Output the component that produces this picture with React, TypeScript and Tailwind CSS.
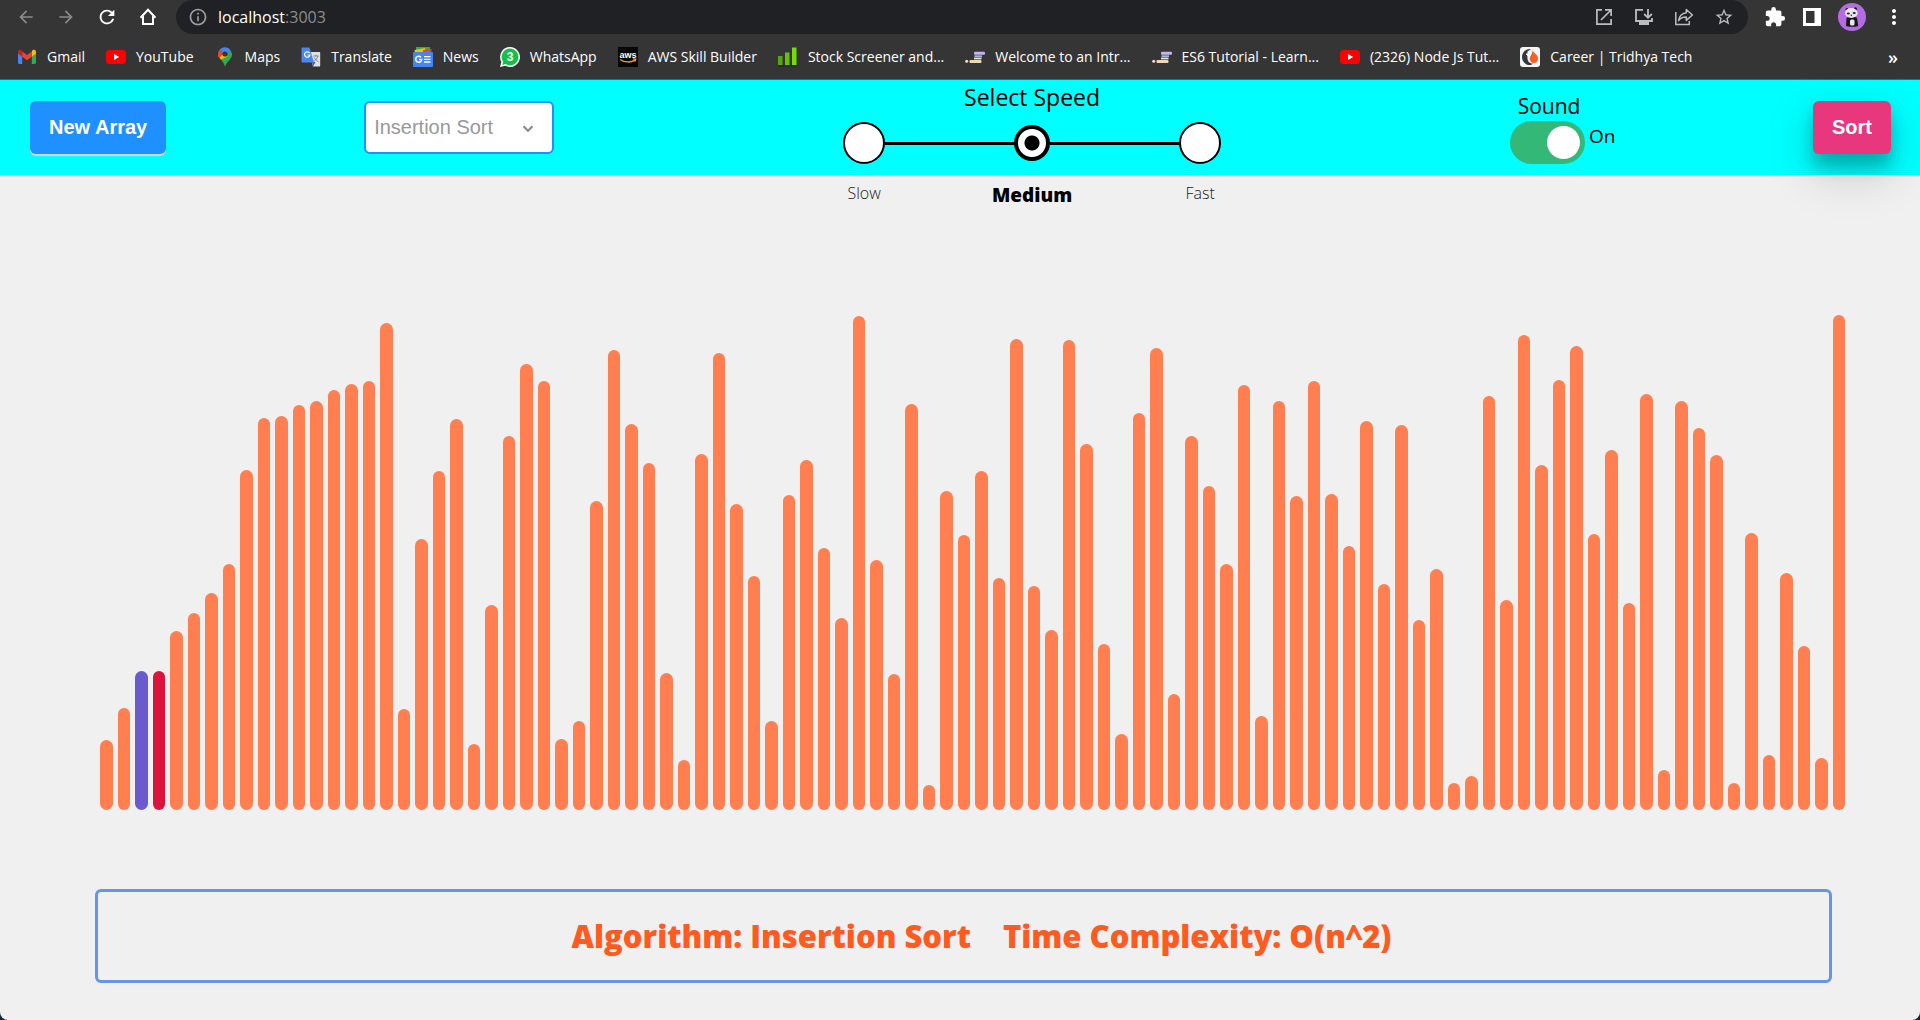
import React, { useState } from "react";
import { MdArrowBack, MdArrowForward, MdExtension, MdInfoOutline, MdMoreVert, MdRefresh, MdStarBorder } from "react-icons/md";

const BAR_VALUES = [
  70, 102, 139, 139, 179, 197, 217, 246, 340, 392, 394, 405, 409, 420, 426, 429, 487, 101, 271, 339, 391, 66, 205, 374,
  446, 429, 71, 89, 309, 460, 386, 347, 137, 50, 356, 457, 306, 234, 89, 315, 350, 262, 192, 494, 250, 136, 406, 25,
  319, 275, 339, 232, 471, 224, 180, 470, 366, 166, 76, 397, 462, 116, 374, 324, 246, 425, 94, 409, 314, 429, 316, 264,
  389, 226, 385, 190, 241, 27, 34, 414, 210, 475, 345, 430, 464, 276, 360, 207, 416, 40, 409, 382, 355, 27, 277, 55,
  237, 164, 52, 495,
];

function HomeIcon() {
  return (
    <svg viewBox="0 0 20 20" className="size-5" fill="none" stroke="currentColor" strokeWidth="2">
      <path d="M2.500 10.800 10 2.800l7.500 8" />
      <path d="M5 9v8h10V9" />
    </svg>
  );
}

function OpenIcon() {
  return (
    <svg viewBox="0 0 20 20" className="size-5" fill="none" stroke="currentColor" strokeWidth="1.700">
      <path d="M8 2.900H2.900v14.200h14.200V12" />
      <path d="M11 2.900h6.100V9M17 3 7 13" />
    </svg>
  );
}

function InstallIcon() {
  return (
    <svg viewBox="0 0 20 20" className="size-5" fill="none" stroke="currentColor" strokeWidth="1.800">
      <path d="M9 2.900H2V14h16v-3" />
      <path d="M14 2v8.500M10.200 7 14 10.800 17.800 7" />
      <path d="M5 16.500h10" strokeWidth="3" />
    </svg>
  );
}

function ShareIcon() {
  return (
    <svg viewBox="0 0 20 20" className="size-5" fill="none" stroke="currentColor" strokeWidth="1.500">
      <path d="M1.800 5v12.500h13.500V14" />
      <path d="M12.300 2.500 18.400 8l-6.100 5.400v-3.300C8.800 10 6.600 11 4.600 13.600c.5-4.200 3.200-7.200 7.700-7.900z" strokeLinejoin="round" />
    </svg>
  );
}

function SidePanelIcon() {
  return (
    <svg viewBox="0 0 20 20" className="size-5" fill="currentColor">
      <path d="M1 1h18v18H1zM4 4v12h8.500V4z" fillRule="evenodd" />
    </svg>
  );
}

function PandaAvatar() {
  return (
    <svg viewBox="0 0 28 28" className="size-7">
      <circle cx="14" cy="14" r="14" fill="#b56ce2" />
      <path d="M8.500 15c3-2 8-2 10.500 0l1.300 8-3 .8H11l-3-.8z" fill="#17171b" />
      <circle cx="9" cy="6.500" r="1.500" fill="#17171b" />
      <circle cx="17.500" cy="5.700" r="1.500" fill="#17171b" />
      <ellipse cx="13.300" cy="10" rx="6.300" ry="5" fill="#e8e8ea" />
      <ellipse cx="10.300" cy="10.600" rx="1.600" ry="1" fill="#26262b" />
      <ellipse cx="16.200" cy="10" rx="1.600" ry="1" fill="#26262b" />
      <circle cx="13.300" cy="12.200" r=".8" fill="#26262b" />
      <rect x="12" y="16.500" width="4.500" height="6" rx="1.500" fill="#e8e8ea" />
    </svg>
  );
}

function GmailIcon() {
  return (
    <svg viewBox="0 0 20 20" className="size-5">
      <path d="M1 5v10.600c0 .8.500 1.300 1.300 1.300H5.200V8.500z" fill="#4285f4" />
      <path d="M19 5v10.600c0 .8-.5 1.300-1.300 1.300h-2.900V8.500z" fill="#34a853" />
      <path d="M14.800 4.700v5L19 6.600V5c0-2-2.200-2.800-3.500-1.700z" fill="#fbbc04" />
      <path d="M1 5v1.600l4.200 3.100v-5l-.7-1.400C3.200 2.200 1 3 1 5z" fill="#c5221f" />
      <path d="M5.200 4.500v5.200L10 13.300l4.800-3.600V4.500L10 8.100z" fill="#ea4335" />
    </svg>
  );
}

function YouTubeIcon() {
  return (
    <svg viewBox="0 0 20 20" className="size-5">
      <rect x="0" y="3" width="20" height="14" rx="3.500" fill="#f00" />
      <path d="m8 7 5.200 3L8 13z" fill="#fff" />
    </svg>
  );
}

function MapsIcon() {
  return (
    <svg viewBox="0 0 20 20" className="size-5">
      <path d="M10 20c-.8-3.500-2-5-4.200-7.500L15 3.300c1.400 1.200 2 2.700 2 4.200 0 5-5.500 6.500-7 12.500z" fill="#34a853" />
      <path d="M5.800 12.500C3.800 10 3 9 3 7.200l5-1.700 4.500 4z" fill="#fbbc04" />
      <path d="M3 7.200C3 5.300 3.700 3.800 4.600 2.700l4.200 3.600-4.600 4.600C3.500 9.800 3 8.700 3 7.200z" fill="#ea4335" />
      <path d="M4.600 2.700C6 1 8 .2 10 .2c2.300 0 4.200 1.200 5.600 3.100l-3.800 3.900L8.600 6z" fill="#4285f4" />
      <circle cx="10" cy="7" r="2.600" fill="#353535" />
    </svg>
  );
}

function TranslateIcon() {
  return (
    <svg viewBox="0 0 20 20" className="size-5">
      <path d="M8 5h10.200c.6 0 1 .4 1 1v12.500c0 .6-.4 1-1 1H12z" fill="#dfe1e5" />
      <path d="M11 15h3.500L12 19.500z" fill="#3a5ba9" />
      <path d="M1.500.5h7l4.500 15H1.500c-.6 0-1-.4-1-1v-13c0-.6.4-1 1-1z" fill="#4a86ee" />
      <path d="M8.600 6A2.700 2.700 0 1 0 9 8H6.600" fill="none" stroke="#fff" strokeWidth="1.200" />
      <path d="M12.300 9h5.500M15 7.700V9m1.700 0c-.4 2-1.700 4-3.700 5.300M13.500 10.500c.7 1.800 2.200 3.200 4.200 4.500" fill="none" stroke="#7b8086" strokeWidth=".9" />
    </svg>
  );
}

function NewsIcon() {
  return (
    <svg viewBox="0 0 20 20" className="size-5">
      <path d="M3 0h14v7H3z" fill="#34a853" />
      <path d="M1.500 3 12 1l1 5H2z" fill="#fbbc04" />
      <path d="m10 3 8.500-1-.5 5h-8z" fill="#ea4335" />
      <rect y="5" width="20" height="15" rx="1" fill="#4285f4" />
      <path d="M8 10.300A3 3 0 1 0 8.700 12.500H6" fill="none" stroke="#fff" strokeWidth="1.500" />
      <path d="M11 9.600h6.500M11 12.300h6.500M11 15h6.500" stroke="#fff" strokeWidth="1.300" />
    </svg>
  );
}

function WhatsAppIcon() {
  return (
    <svg viewBox="0 0 20 20" className="size-5">
      <path d="M10 0a10 10 0 1 1-4.800 18.800L0 20l1.400-5A10 10 0 0 1 10 0z" fill="#fff" />
      <path d="M10 1.600a8.400 8.400 0 1 1-4.500 15.500L2.300 18l.9-3.200A8.400 8.400 0 0 1 10 1.600z" fill="#10c245" />
      <text x="10" y="14.200" textAnchor="middle" fontSize="12" fontWeight="700" fontFamily="Liberation Sans" fill="#fff">3</text>
    </svg>
  );
}

function AwsIcon() {
  return (
    <svg viewBox="0 0 20 20" className="size-5">
      <rect width="20" height="20" fill="#050708" />
      <text x="10" y="10.500" textAnchor="middle" fontSize="9" fontWeight="700" fontFamily="Liberation Sans" fill="#fff">aws</text>
      <path d="M2 12.500c4.500 3.200 11 3.200 15 .6M15 11.800l2.800.2-.8 2.600" fill="none" stroke="#f79a1e" strokeWidth="1.300" />
    </svg>
  );
}

function StockIcon() {
  return (
    <svg viewBox="0 0 20 20" className="size-5">
      <rect x="0" y="9" width="4.500" height="9" fill="#58a60f" />
      <rect x="7" y="5.500" width="4.500" height="12.500" fill="#66bf12" />
      <rect x="14" y="0.500" width="4.500" height="17.500" fill="#74dc0d" />
      <path d="M0 19h19" stroke="#252525" />
    </svg>
  );
}

function StepsIcon() {
  return (
    <svg viewBox="0 0 20 20" className="size-5">
      <rect x="9" y="4.700" width="11" height="3.100" rx="1" fill="#c3b5f5" />
      <rect x="9.500" y="8.300" width="7.500" height="1.800" fill="#a9b6c4" />
      <rect x="9" y="10.600" width="7.500" height="1.800" fill="#dbe6df" />
      <rect x="4.500" y="13" width="12" height="2.900" rx="1" fill="#f5d5b0" />
      <circle cx="1.700" cy="14.300" r="1.500" fill="#f5dfc8" />
    </svg>
  );
}

function TridhyaIcon() {
  return (
    <svg viewBox="0 0 20 20" className="size-5">
      <rect width="20" height="20" rx="3" fill="#f7f4f5" />
      <path d="M11 2C5.500 1.500 2 5.500 2 10s3.500 8.500 9 8l2-1.500C9 16.500 7.500 14 7.500 11V8H6V6.500h1.500V4.500z" fill="#34373f" />
      <path d="M12.500 3c.5 2.500 5.500 4.500 5.500 8.500 0 3-2 4.500-4 4.500-2.600 0-4.200-1.800-4.200-4.500 0-3 3-4 2.700-8.500z" fill="#f4602c" />
      <path d="M8.500 5.500v6M7 8h3.500" stroke="#fff" strokeWidth="1.400" />
    </svg>
  );
}

const BOOKMARKS = [
  { label: "Gmail", Icon: GmailIcon },
  { label: "YouTube", Icon: YouTubeIcon },
  { label: "Maps", Icon: MapsIcon },
  { label: "Translate", Icon: TranslateIcon },
  { label: "News", Icon: NewsIcon },
  { label: "WhatsApp", Icon: WhatsAppIcon },
  { label: "AWS Skill Builder", Icon: AwsIcon },
  { label: "Stock Screener and...", Icon: StockIcon },
  { label: "Welcome to an Intr...", Icon: StepsIcon },
  { label: "ES6 Tutorial - Learn...", Icon: StepsIcon },
  { label: "(2326) Node Js Tut...", Icon: YouTubeIcon },
  { label: "Career | Tridhya Tech", Icon: TridhyaIcon },
];

function BrowserBar() {
  return (
    <header className="border-b border-[#5c5c5c] bg-[#353535] text-white">
      <div className="flex h-[34px] items-center pr-3.5 pl-4">
        <div className="flex items-center gap-5 pr-[18px]">
          <button aria-label="Back" className="text-[#8a8a8a]"><MdArrowBack className="size-5" /></button>
          <button aria-label="Forward" className="text-[#8a8a8a]"><MdArrowForward className="size-5" /></button>
          <button aria-label="Reload"><MdRefresh className="size-[22px]" /></button>
          <button aria-label="Home"><HomeIcon /></button>
        </div>
        <div className="flex h-full flex-1 items-center rounded-full bg-[#202124] pr-3.5 pl-3">
          <MdInfoOutline className="size-5 text-[#9aa0a6]" />
          <div className="ml-2.5 flex-1 text-base leading-6">
            localhost<span className="text-[#8b8e92]">:3003</span>
          </div>
          <div className="flex gap-5 text-[#bdbdbd]">
            <button aria-label="Open"><OpenIcon /></button>
            <button aria-label="Install"><InstallIcon /></button>
            <button aria-label="Share"><ShareIcon /></button>
            <button aria-label="Bookmark"><MdStarBorder className="size-5" /></button>
          </div>
        </div>
        <div className="flex items-center gap-4 pl-4">
          <button aria-label="Extensions"><MdExtension className="size-[22px]" /></button>
          <button aria-label="Side panel"><SidePanelIcon /></button>
          <button aria-label="Profile"><PandaAvatar /></button>
          <button aria-label="Menu"><MdMoreVert className="size-6" /></button>
        </div>
      </div>
      <nav className="flex h-[45px] items-center gap-[21px] pr-[22px] pl-[17px] text-sm">
        {BOOKMARKS.map(({ label, Icon }) => (
          <a key={label} href="#" className="flex items-center gap-2.5 whitespace-nowrap">
            <Icon />
            {label}
          </a>
        ))}
        <button aria-label="More bookmarks" className="ml-auto text-lg leading-5 font-semibold">»</button>
      </nav>
    </header>
  );
}

const SPEEDS = ["Slow", "Medium", "Fast"];

function SpeedPicker() {
  const [speed, setSpeed] = useState("Medium");
  return (
    <fieldset className="w-[560px] self-start px-7">
      <legend className="mb-2 w-full text-center text-[23px] leading-[34px]">Select Speed</legend>
      <div className="grid grid-cols-3">
        {SPEEDS.map((name, i) => (
          <label key={name} className="flex flex-col">
            <span className="flex h-[42px] items-center">
              <span className={i > 0 ? "h-[3px] flex-1 bg-black" : "flex-1"} />
              <input
                type="radio"
                name="speed"
                checked={speed === name}
                onChange={() => setSpeed(name)}
                className="size-[42px] appearance-none rounded-full border-2 border-black bg-white checked:size-9 checked:border-4 checked:bg-[radial-gradient(circle,#000_7px,#fff_8px)]"
              />
              <span className={i < 2 ? "h-[3px] flex-1 bg-black" : "flex-1"} />
            </span>
            <span
              className={
                speed === name
                  ? "mt-4 text-center text-[19px] leading-[30px] font-extrabold"
                  : "mt-4 text-center text-base leading-[26px] font-light text-[#222]"
              }
            >
              {name}
            </span>
          </label>
        ))}
      </div>
    </fieldset>
  );
}

function SoundSwitch() {
  const [on, setOn] = useState(true);
  return (
    <div>
      <label htmlFor="sound" className="block w-[78px] text-center text-[21px] leading-[30px]">Sound</label>
      <div className="flex gap-1">
        <input
          id="sound"
          type="checkbox"
          role="switch"
          checked={on}
          onChange={() => setOn(!on)}
          className="h-[43px] w-[75px] appearance-none rounded-full bg-[#ccc] before:mt-[5px] before:ml-[5px] before:block before:size-[33px] before:rounded-full before:bg-white checked:bg-[#33b878] checked:before:ml-[37px]"
        />
        <span className="w-[26px] text-[19px] leading-[30px]">{on ? "On" : "Off"}</span>
      </div>
    </div>
  );
}

function Toolbar() {
  return (
    <div className="flex h-[95px] items-center justify-between bg-[#00ffff] pr-[29px] pl-[30px]">
      <button className="h-[53px] rounded-md bg-[#1e90ff] px-[19px] pb-0.5 font-['Liberation_Sans',sans-serif] text-xl font-bold text-white shadow-[0_2px_0_#d3d3d3]">
        New Array
      </button>
      <div className="relative">
        <select
          aria-label="Algorithm"
          className="h-[53px] w-[190px] appearance-none rounded-md border-2 border-[#1e90ff] bg-white px-2 pb-0.5 font-['Liberation_Sans',sans-serif] text-xl text-[#999]"
        >
          <option>Insertion Sort</option>
        </select>
        <svg viewBox="0 0 12 8" className="pointer-events-none absolute top-6 right-5 h-2 w-3" fill="none" stroke="#8a8a8a" strokeWidth="2">
          <path d="m1.500 1.200 4.500 4.600 4.500-4.600" />
        </svg>
      </div>
      <SpeedPicker />
      <SoundSwitch />
      <button className="h-[53px] rounded-md bg-[#e8377d] px-[19px] pb-0.5 font-['Liberation_Sans',sans-serif] text-xl font-bold text-white shadow-[0_12px_16px_rgba(0,0,0,0.24),0_17px_50px_rgba(0,0,0,0.19)]">
        Sort
      </button>
    </div>
  );
}

function barColor(i: number) {
  if (i === 2) return "flex-1 rounded-full bg-[#6a5acd]";
  if (i === 3) return "flex-1 rounded-full bg-[#dc143c]";
  return "flex-1 rounded-full bg-[#ff7f50]";
}

export default function App() {
  return (
    <div className="min-h-screen bg-[#0b2a30] font-['Segoe_UI','Open_Sans',sans-serif] text-black">
      <div className="flex min-h-screen flex-col overflow-hidden rounded-b-lg bg-[#f0f0f0]">
        <BrowserBar />
        <Toolbar />
        <main>
          <div className="flex h-[635px] items-end gap-[5px] pr-[75px] pl-[100px]">
            {BAR_VALUES.map((value, i) => (
              <div key={i} className={barColor(i)} style={{ height: value }} />
            ))}
          </div>
          <section className="mt-[79px] mr-[88px] mb-9 ml-[95px] flex h-[94px] items-center justify-center rounded-md border-3 border-[#6495ed] text-[31px] font-extrabold text-[#ff5a1f]">
            <h2 className="ml-9">Algorithm: Insertion Sort</h2>
            <h2 className="ml-8">Time Complexity: O(n^2)</h2>
          </section>
        </main>
      </div>
    </div>
  );
}
